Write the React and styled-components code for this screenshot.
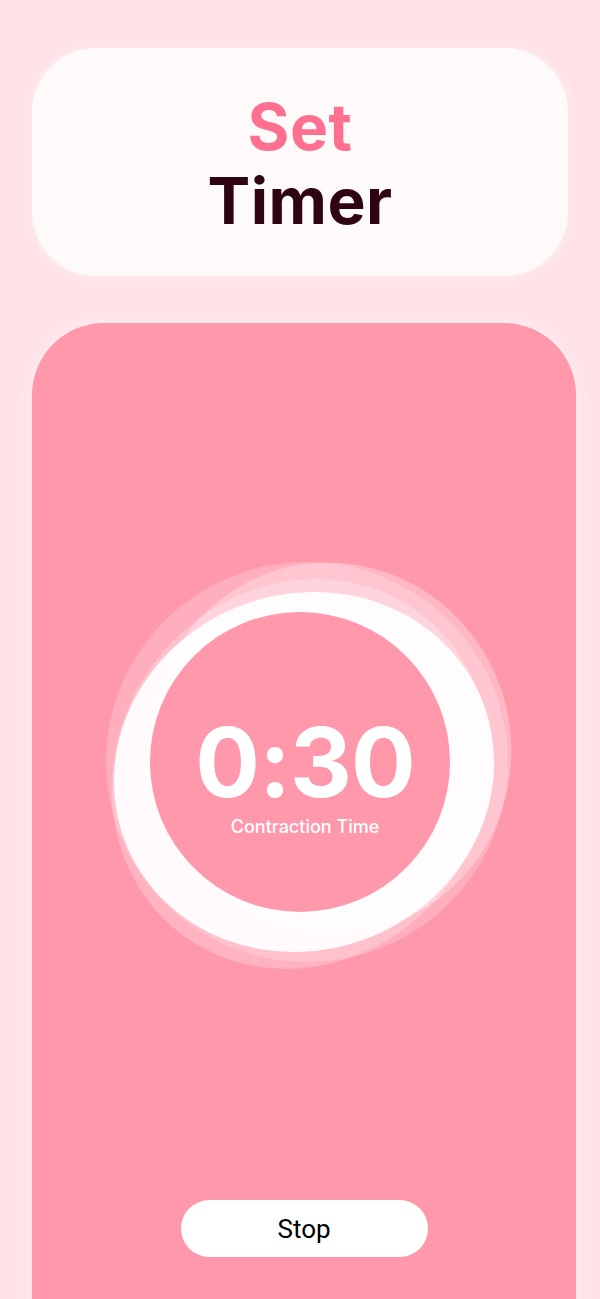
import styled, { createGlobalStyle } from "styled-components"

const GlobalStyle = createGlobalStyle`
    html, body {
        margin: 0;
        padding: 0;
        background: #FFE0E6;
        font-family: Inter, "Noto Sans", sans-serif;
    }
`

export default function App(){
    return(
        <>
            <GlobalStyle />
            <Page>
                <Header>
                    <h1>
                        <span className="accent">Set</span>
                        <span className="main">Timer</span>
                    </h1>
                </Header>

                <TimerCard>
                    <Dial>
                        <Rings />
                        <Readout>
                            <span className="time">0:30</span>
                            <span className="label">Contraction Time</span>
                        </Readout>
                    </Dial>
                    <StopButton>Stop</StopButton>
                </TimerCard>
            </Page>
        </>
    )
}

function Rings(){
    return(
        <svg width="420" height="420" viewBox="0 0 420 420">
            <ellipse cx="212" cy="210" rx="201" ry="200" fill="#fff" opacity="0.22" />
            <ellipse cx="236" cy="196" rx="180" ry="186" fill="#fff" opacity="0.3"
                transform="rotate(-15 236 196)" />
            <ellipse cx="206" cy="222" rx="184" ry="200" fill="#fff" opacity="0.25"
                transform="rotate(35 206 222)" />
            <ellipse cx="209" cy="220" rx="192" ry="178" fill="#fff" opacity="0.93"
                transform="rotate(-22 209 220)" />
            <circle cx="205" cy="210" r="150" fill="#FF98AB" />
        </svg>
    )
}

const Page = styled.div`
    height: 1299px;
    overflow: hidden;
    padding: 48px 0 0 32px;
    box-sizing: border-box;
    display: flex;
    flex-direction: column;
    gap: 47px;
`

const Header = styled.div`
    width: 536px;
    height: 228px;
    flex-shrink: 0;
    border-radius: 64px;
    background: #FFFAFA;
    box-shadow: 0 0 24px rgba(255, 255, 255, 0.5);
    display: flex;
    align-items: center;
    justify-content: center;

    h1 {
        margin: 0;
        display: flex;
        flex-direction: column;
        align-items: center;
        font-weight: 700;
        font-size: 64px;
        line-height: 74px;
        letter-spacing: 0.5px;
        padding-top: 4px;
    }

    .accent {
        color: #FF7090;
    }

    .main {
        color: #2E0510;
    }
`

const TimerCard = styled.div`
    width: 544px;
    height: 1060px;
    flex-shrink: 0;
    border-radius: 72px;
    background: #FF98AB;
    box-shadow: 0 0 30px rgba(255, 255, 255, 0.55);
    display: flex;
    flex-direction: column;
    align-items: center;
    padding-top: 229px;
    box-sizing: border-box;
`

const Dial = styled.div`
    position: relative;
    width: 420px;
    height: 420px;
    margin-left: 2px;

    svg {
        display: block;
    }
`

const Readout = styled.div`
    position: absolute;
    inset: 0;
    display: flex;
    flex-direction: column;
    align-items: center;
    justify-content: center;
    color: #fff;
    padding-top: 28px;
    box-sizing: border-box;

    .time {
        font-size: 96px;
        font-weight: 700;
        line-height: 96px;
        letter-spacing: -1px;
    }

    .label {
        font-size: 18px;
        font-weight: 500;
        line-height: 22px;
        margin-top: 6px;
    }
`

const StopButton = styled.button`
    margin-top: 228px;
    width: 247px;
    height: 57px;
    flex-shrink: 0;
    border: none;
    border-radius: 29px;
    background: #fff;
    color: #000;
    font-family: Roboto, "Noto Sans", sans-serif;
    font-size: 26px;
    font-weight: 400;
    cursor: pointer;
`
